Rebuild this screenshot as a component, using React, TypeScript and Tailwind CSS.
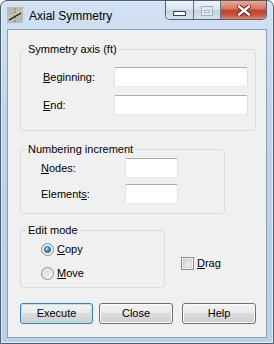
import React from "react"

function TitleIcon() {
  return (
    <svg width="16" height="16" viewBox="0 0 16 16" className="shrink-0">
      <rect x="0" y="0" width="16" height="16" fill="#b9b9b9" />
      <line x1="8" y1="1" x2="8" y2="15" stroke="#7d7d7d" strokeWidth="1" strokeDasharray="2 1" />
      <line x1="1" y1="11" x2="15" y2="4" stroke="#f4ec2a" strokeWidth="1.2" strokeDasharray="2 1.5" />
      <line x1="2" y1="13" x2="14" y2="6" stroke="#111" strokeWidth="1.1" />
    </svg>
  )
}

function Radio({ checked }: { checked?: boolean }) {
  return (
    <svg width="13" height="13" viewBox="0 0 13 13" className="shrink-0">
      <defs>
        <linearGradient id="rbg" x1="0" y1="0" x2="1" y2="1">
          <stop offset="0" stopColor="#d2d2d2" />
          <stop offset="1" stopColor="#fbfbfb" />
        </linearGradient>
        <radialGradient id="rdot" cx="0.4" cy="0.35" r="0.75">
          <stop offset="0" stopColor="#c4ecff" />
          <stop offset="0.45" stopColor="#3b98d6" />
          <stop offset="1" stopColor="#0f3f73" />
        </radialGradient>
      </defs>
      <circle cx="6.5" cy="6.5" r="6" fill="url(#rbg)" stroke="#8c8c8c" strokeWidth="1" />
      <circle cx="6.5" cy="6.5" r="4.6" fill="none" stroke="#f4f4f4" strokeWidth="0.8" />
      {checked && <circle cx="6.5" cy="6.5" r="3.1" fill="url(#rdot)" stroke="#1d4f80" strokeWidth="0.6" />}
    </svg>
  )
}

function CheckBox() {
  return (
    <svg width="13" height="13" viewBox="0 0 13 13" className="shrink-0">
      <defs>
        <linearGradient id="cbg" x1="0" y1="0" x2="1" y2="1">
          <stop offset="0" stopColor="#cbcfd5" />
          <stop offset="1" stopColor="#f7f7f7" />
        </linearGradient>
      </defs>
      <rect x="0.5" y="0.5" width="12" height="12" fill="#f4f4f4" stroke="#8e8f8f" />
      <rect x="2.5" y="2.5" width="8" height="8" fill="url(#cbg)" stroke="#bcc0c6" strokeWidth="0.6" />
    </svg>
  )
}

function Field({ label, k, rest, w }: { label: string; k: string; rest: string; w: string }) {
  return (
    <div className="flex items-center">
      <span className={w}>
        {label}
        <u>{k}</u>
        {rest}
      </span>
      <input
        type="text"
        className="h-[20px] w-full bg-white border border-[#e2e3ea] border-t-[#abadb3] border-b-[#e3e9ef] rounded-[2px] outline-none"
      />
    </div>
  )
}

function Btn({ children, primary }: { children: React.ReactNode; primary?: boolean }) {
  return (
    <button
      className={
        "h-[21px] rounded-[3px] border text-[11px] leading-[13px] text-black bg-[linear-gradient(#f2f2f2_0%,#ebebeb_48%,#dddddd_50%,#cfcfcf_100%)] " +
        (primary
          ? "border-[#3c7fb1] shadow-[inset_0_0_0_1px_#b7e3f8]"
          : "border-[#707070] shadow-[inset_0_0_0_1px_#fbfbfb]")
      }
    >
      {children}
    </button>
  )
}

export default function App() {
  return (
    <div className="w-[274px] h-[344px] flex flex-col rounded-t-[7px] border border-[#4e5c6c] bg-[linear-gradient(180deg,#d2e2f4_0%,#c0d5ec_30%,#b9d0e9_100%)] shadow-[inset_0_0_0_1px_#e2ecf7] font-['Liberation_Sans',Arial,sans-serif] text-black select-none">
      {/* title bar */}
      <div className="h-[28px] flex items-start shrink-0">
        <div className="mt-[6px] ml-[6px]">
          <TitleIcon />
        </div>
        <span className="ml-[6px] mt-[8px] text-[12px] leading-[15px]">Axial Symmetry</span>
        <div className="ml-auto mr-[6px] flex h-[19px] rounded-b-[5px] border border-t-0 border-[#4f6178] overflow-hidden">
          <div className="w-[28px] border-r border-[#63758c] bg-[linear-gradient(#eef3f9_0%,#dce6f1_45%,#c5d4e4_50%,#d6e2ef_100%)] flex justify-center">
            <div className="mt-[10px] w-[13px] h-[5px] bg-white border border-[#34465c]" />
          </div>
          <div className="w-[27px] border-r border-[#63758c] bg-[linear-gradient(#eef3f9_0%,#dce6f1_45%,#c5d4e4_50%,#d6e2ef_100%)] flex justify-center">
            <div className="mt-[5px] w-[12px] h-[10px] border border-[#9fb0c3] bg-[#dfe7f0] flex items-center justify-center">
              <div className="w-[6px] h-[3px] border border-[#a8b7c8] bg-white" />
            </div>
          </div>
          <div className="w-[45px] bg-[linear-gradient(#e9a996_0%,#d7745d_45%,#c4412c_50%,#cc4e36_75%,#e08a6c_100%)] flex justify-center">
            <svg width="14" height="11" viewBox="0 0 14 11" className="mt-[4px]">
              <path d="M2 1.5 L12 9.5 M12 1.5 L2 9.5" stroke="#5a1a12" strokeWidth="4.2" strokeLinecap="square" />
              <path d="M2 1.5 L12 9.5 M12 1.5 L2 9.5" stroke="#ffffff" strokeWidth="2.4" strokeLinecap="square" />
            </svg>
          </div>
        </div>
      </div>

      {/* client area */}
      <div className="mx-[6px] mb-[5px] flex-1 border border-[#8b9fb6] bg-[#f0f0f0] pt-[13px] pl-[12px] text-[11px] leading-[13px]">
        <fieldset className="w-[236px] border border-[#d5dfe5] rounded-[3px] pb-[15px]">
          <legend className="ml-[5px] px-[2px]">Symmetry axis (ft)</legend>
          <div className="mt-[11px] pl-[22px] pr-[7px] flex flex-col gap-[8px]">
            <Field label="" k="B" rest="eginning:" w="w-[71px] shrink-0" />
            <Field label="" k="E" rest="nd:" w="w-[71px] shrink-0" />
          </div>
        </fieldset>

        <fieldset className="mt-[12px] w-[205px] border border-[#d5dfe5] rounded-[3px] pb-[9px]">
          <legend className="ml-[5px] px-[2px]">Numbering increment</legend>
          <div className="mt-[2px] pl-[20px] flex flex-col gap-[6px]">
            <div className="w-[137px]">
              <Field label="" k="N" rest="odes:" w="w-[84px] shrink-0" />
            </div>
            <div className="w-[137px]">
              <Field label="Element" k="s" rest=":" w="w-[84px] shrink-0" />
            </div>
          </div>
        </fieldset>

        <div className="mt-[10px] flex items-start">
          <fieldset className="w-[145px] border border-[#d5dfe5] rounded-[3px] pb-[7px]">
            <legend className="ml-[5px] px-[2px]">Edit mode</legend>
            <div className="mt-[6px] pl-[20px] flex flex-col gap-[11px]">
              <div className="flex items-center gap-[3px] h-[13px]">
                <Radio checked />
                <span>
                  <u>C</u>opy
                </span>
              </div>
              <div className="flex items-center gap-[3px] h-[13px]">
                <Radio />
                <span>
                  <u>M</u>ove
                </span>
              </div>
            </div>
          </fieldset>
          <div className="ml-[16px] mt-[33px] flex items-center gap-[3px] h-[13px]">
            <CheckBox />
            <span>
              <u>D</u>rag
            </span>
          </div>
        </div>

        <div className="mt-[15px] flex">
          <div className="w-[73px] flex flex-col">
            <Btn primary>Execute</Btn>
          </div>
          <div className="ml-[6px] w-[74px] flex flex-col">
            <Btn>Close</Btn>
          </div>
          <div className="ml-[9px] w-[74px] flex flex-col">
            <Btn>Help</Btn>
          </div>
        </div>
      </div>
    </div>
  )
}
